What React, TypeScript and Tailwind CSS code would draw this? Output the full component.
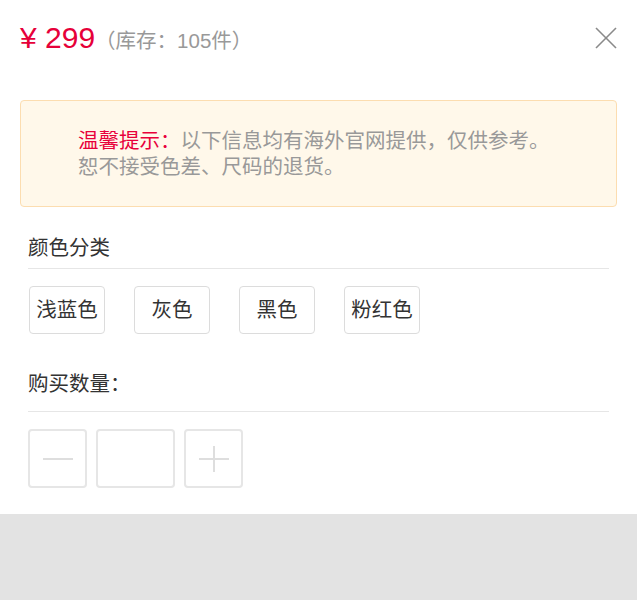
import React from 'react';

const COLORS = ['浅蓝色', '灰色', '黑色', '粉红色'];

export default function App() {
  return (
    <div className="w-[637px] h-[600px] flex flex-col bg-white font-['Liberation_Sans','Noto_Sans_CJK_SC',sans-serif]">
      <div className="h-[514px] flex flex-col">
        {/* header */}
        <div className="h-[75px] flex items-center justify-between px-5">
          <div className="flex items-baseline">
            <span className="text-[30px] leading-none text-[#e60039]">¥ 299</span>
            <span className="text-[20.5px] leading-none text-[#999]">（库存：105件）</span>
          </div>
          <svg width="22" height="22" viewBox="0 0 22 22" className="block">
            <line x1="1" y1="1" x2="21" y2="21" stroke="#8a8a8a" strokeWidth="1.6" />
            <line x1="21" y1="1" x2="1" y2="21" stroke="#8a8a8a" strokeWidth="1.6" />
          </svg>
        </div>

        {/* notice */}
        <div className="mx-5 mt-[25px] h-[107px] flex items-center pl-[57px] bg-[#fff8ea] border border-[#fcddb0] rounded-[4px]">
          <p className="text-[20.5px] leading-[26px] text-[#999]">
            <span className="text-[#e8003a]">温馨提示：</span>以下信息均有海外官网提供，仅供参考。
            <br />
            恕不接受色差、尺码的退货。
          </p>
        </div>

        {/* color */}
        <div className="mx-7">
          <div className="mt-[27px] pb-[6px] border-b border-[#e6e6e6] text-[20.5px] leading-[28px] text-[#333]">
            颜色分类
          </div>
          <div className="mt-[17px] pl-px flex gap-[29px]">
            {COLORS.map((c) => (
              <button
                key={c}
                className="w-[76px] h-[48px] flex items-center justify-center border border-[#dcdcdc] rounded-[4px] bg-white text-[20.5px] text-[#333]"
              >
                {c}
              </button>
            ))}
          </div>
        </div>

        {/* quantity */}
        <div className="mx-7">
          <div className="mt-[36px] pb-[13px] border-b border-[#e6e6e6] text-[20.5px] leading-[28px] text-[#333]">
            购买数量：
          </div>
          <div className="mt-[17px] flex gap-[9px]">
            <div className="w-[59px] h-[59px] flex items-center justify-center border-2 border-[#e6e6e6] rounded-[4px]">
              <div className="w-[30px] h-[2px] bg-[#dedede]" />
            </div>
            <div className="w-[79px] h-[59px] border-2 border-[#e6e6e6] rounded-[4px]" />
            <div className="relative w-[59px] h-[59px] flex items-center justify-center border-2 border-[#e6e6e6] rounded-[4px]">
              <div className="w-[30px] h-[2px] bg-[#dedede]" />
              <div className="absolute w-[2px] h-[26px] bg-[#dedede]" />
            </div>
          </div>
        </div>
      </div>
      <div className="flex-1 bg-[#e3e3e3]" />
    </div>
  );
}
